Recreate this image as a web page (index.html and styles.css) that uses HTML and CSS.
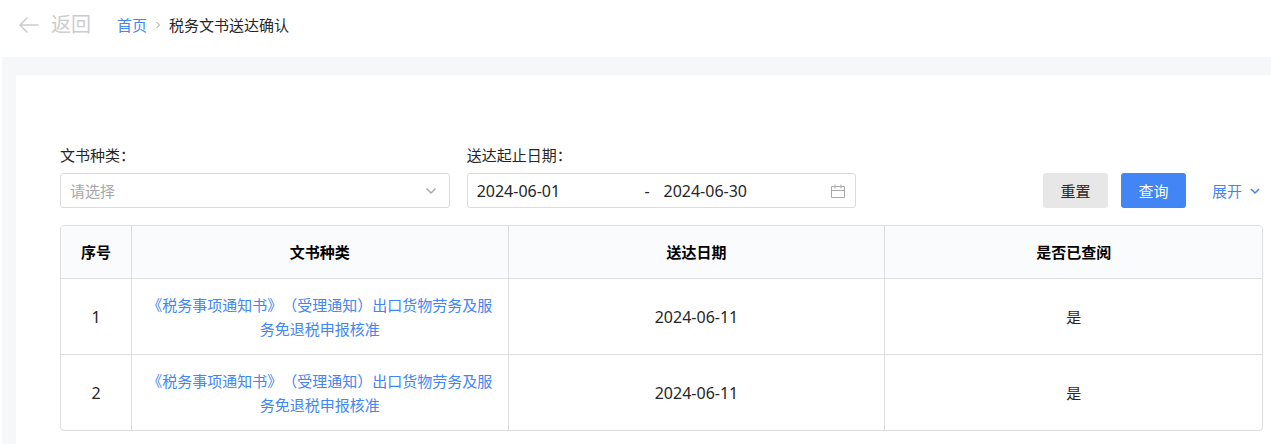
FILE: index.html
```html
<!DOCTYPE html>
<html lang="zh-CN">
<head>
<meta charset="utf-8">
<meta name="viewport" content="width=device-width, initial-scale=1">
<title>税务文书送达确认</title>
<link rel="stylesheet" href="styles.css">
</head>
<body>
<header class="topbar">
  <button class="back" type="button">
    <svg class="back-icon" viewBox="0 0 20 16" aria-hidden="true"><path d="M19.500 8H1M8.500 .5 1 8l7.500 7.500"/></svg>
    <span>返回</span>
  </button>
  <nav class="crumbs">
    <a class="link" href="#">首页</a>
    <svg class="crumb-icon" viewBox="0 0 6 8" aria-hidden="true"><path d="M1.500 1 4.500 4l-3 3"/></svg>
    <span>税务文书送达确认</span>
  </nav>
</header>
<main class="page">
  <section class="card">
    <form class="filters">
      <div class="field">
        <label for="kind">文书种类：</label>
        <div class="control">
          <select id="kind" class="select"><option>请选择</option></select>
          <svg class="select-icon" viewBox="0 0 12 8" aria-hidden="true"><path d="M1.500 1.500 6 6l4.500-4.500"/></svg>
        </div>
      </div>
      <div class="field">
        <label for="from">送达起止日期：</label>
        <div class="control range">
          <input id="from" class="date" type="text" value="2024-06-01">
          <span class="dash">-</span>
          <input class="date" type="text" value="2024-06-30" aria-label="送达截止日期">
          <svg class="calendar" viewBox="0 0 14 14" aria-hidden="true"><path d="M.5 2.500h13v11H.5zM.5 6.500h13M4 .5v4M10 .5v4"/></svg>
        </div>
      </div>
      <div class="actions">
        <button class="btn" type="reset">重置</button>
        <button class="btn primary" type="button">查询</button>
        <a class="link expand" href="#">展开
          <svg class="expand-icon" viewBox="0 0 10 8" aria-hidden="true"><path d="M1 2l4 4 4-4"/></svg>
        </a>
      </div>
    </form>
    <div class="table-wrap">
      <table class="table">
        <thead>
          <tr><th class="index">序号</th><th>文书种类</th><th>送达日期</th><th>是否已查阅</th></tr>
        </thead>
        <tbody>
          <tr>
            <td class="num">1</td>
            <td><a class="link doc" href="#">《税务事项通知书》（受理通知）出口货物劳务及服务免退税申报核准</a></td>
            <td class="num">2024-06-11</td>
            <td>是</td>
          </tr>
          <tr>
            <td class="num">2</td>
            <td><a class="link doc" href="#">《税务事项通知书》（受理通知）出口货物劳务及服务免退税申报核准</a></td>
            <td class="num">2024-06-11</td>
            <td>是</td>
          </tr>
        </tbody>
      </table>
    </div>
  </section>
</main>
</body>
</html>
```

FILE: styles.css
```css
* { box-sizing: border-box; }

html, body { min-height: 100vh; }

body {
  margin: 0;
  display: flex;
  flex-direction: column;
  background: #fff;
  color: #262626;
  font-family: "Noto Sans", "Noto Sans CJK SC", sans-serif;
  font-size: 15px;
  line-height: 24px;
  text-spacing-trim: space-all;
}

button, input, select { font: inherit; color: inherit; }

svg {
  fill: none;
  stroke: currentColor;
  flex: none;
}

.link { color: #4285f4; text-decoration: none; }

.topbar {
  display: flex;
  align-items: center;
  gap: 26px;
  height: 57px;
  padding: 0 19px 8px;
}

.back {
  display: flex;
  align-items: center;
  gap: 12px;
  padding: 0;
  border: 0;
  background: none;
  color: #ccc;
  font-size: 20px;
}

.back-icon { width: 20px; height: 16px; stroke-width: 1.5; }

.crumbs { display: flex; align-items: center; gap: 8px; }

.crumb-icon { width: 6px; height: 8px; color: #999; }

.page {
  flex: 1;
  display: flex;
  margin-left: 2px;
  padding: 18px 0 0 14px;
  background: #f6f7f9;
}

.card {
  flex: 1;
  min-width: 0;
  padding: 68px 8px 12px 44px;
  background: #fff;
}

.filters {
  display: grid;
  grid-template-columns: repeat(3, minmax(0, 1fr));
  gap: 17px;
  align-items: end;
  margin-bottom: 17px;
}

.field label { display: block; margin-bottom: 6px; }

.control { position: relative; height: 35px; }

.select {
  width: 100%;
  height: 100%;
  padding: 0 30px 0 9px;
  border: 1px solid #dcdcdc;
  border-radius: 3px;
  background: #fff;
  color: #a6a6a6;
  appearance: none;
}

.select-icon {
  position: absolute;
  top: 14px;
  right: 13px;
  width: 12px;
  height: 8px;
  color: #aaa;
  stroke-width: 1.5;
  pointer-events: none;
}

.range {
  display: flex;
  align-items: center;
  padding: 0 10px 0 9px;
  border: 1px solid #dcdcdc;
  border-radius: 3px;
  font-size: 16px;
}

.date {
  flex: 1;
  min-width: 0;
  padding: 0;
  border: 0;
  outline: 0;
  background: none;
}

.dash { width: 19px; }

.calendar { width: 14px; height: 14px; color: #aaa; }

.actions { display: flex; justify-content: flex-end; align-items: center; gap: 13px; height: 35px; }

.btn {
  width: 65px;
  height: 35px;
  padding: 0;
  border: 0;
  border-radius: 3px;
  background: #e7e7e7;
}

.btn.primary { background: #4285f4; color: #fff; }

.expand {
  display: flex;
  align-items: center;
  gap: 8px;
  padding: 0 3px 0 13px;
}

.expand-icon { width: 10px; height: 8px; stroke-width: 1.5; }

.table-wrap {
  overflow: hidden;
  border: 1px solid #dcdee0;
  border-radius: 4px;
}

.table {
  width: 100%;
  table-layout: fixed;
  border-collapse: separate;
  border-spacing: 0;
  text-align: center;
}

.table th, .table td {
  padding: 14px 13px;
  border-right: 1px solid #dcdee0;
  border-bottom: 1px solid #dcdee0;
}

.table td { padding-bottom: 13px; }

.table th:last-child, .table td:last-child { border-right: 0; }

.table tbody tr:last-child td { border-bottom: 0; }

.table th { background: #fafbfd; color: #000; font-weight: 700; }

.table .index { width: 71px; }

.table .num { font-size: 16px; }

.field label, .doc {
  font-family: "Noto Sans CJK SC", sans-serif;
  font-language-override: "ZHT";
}
```
